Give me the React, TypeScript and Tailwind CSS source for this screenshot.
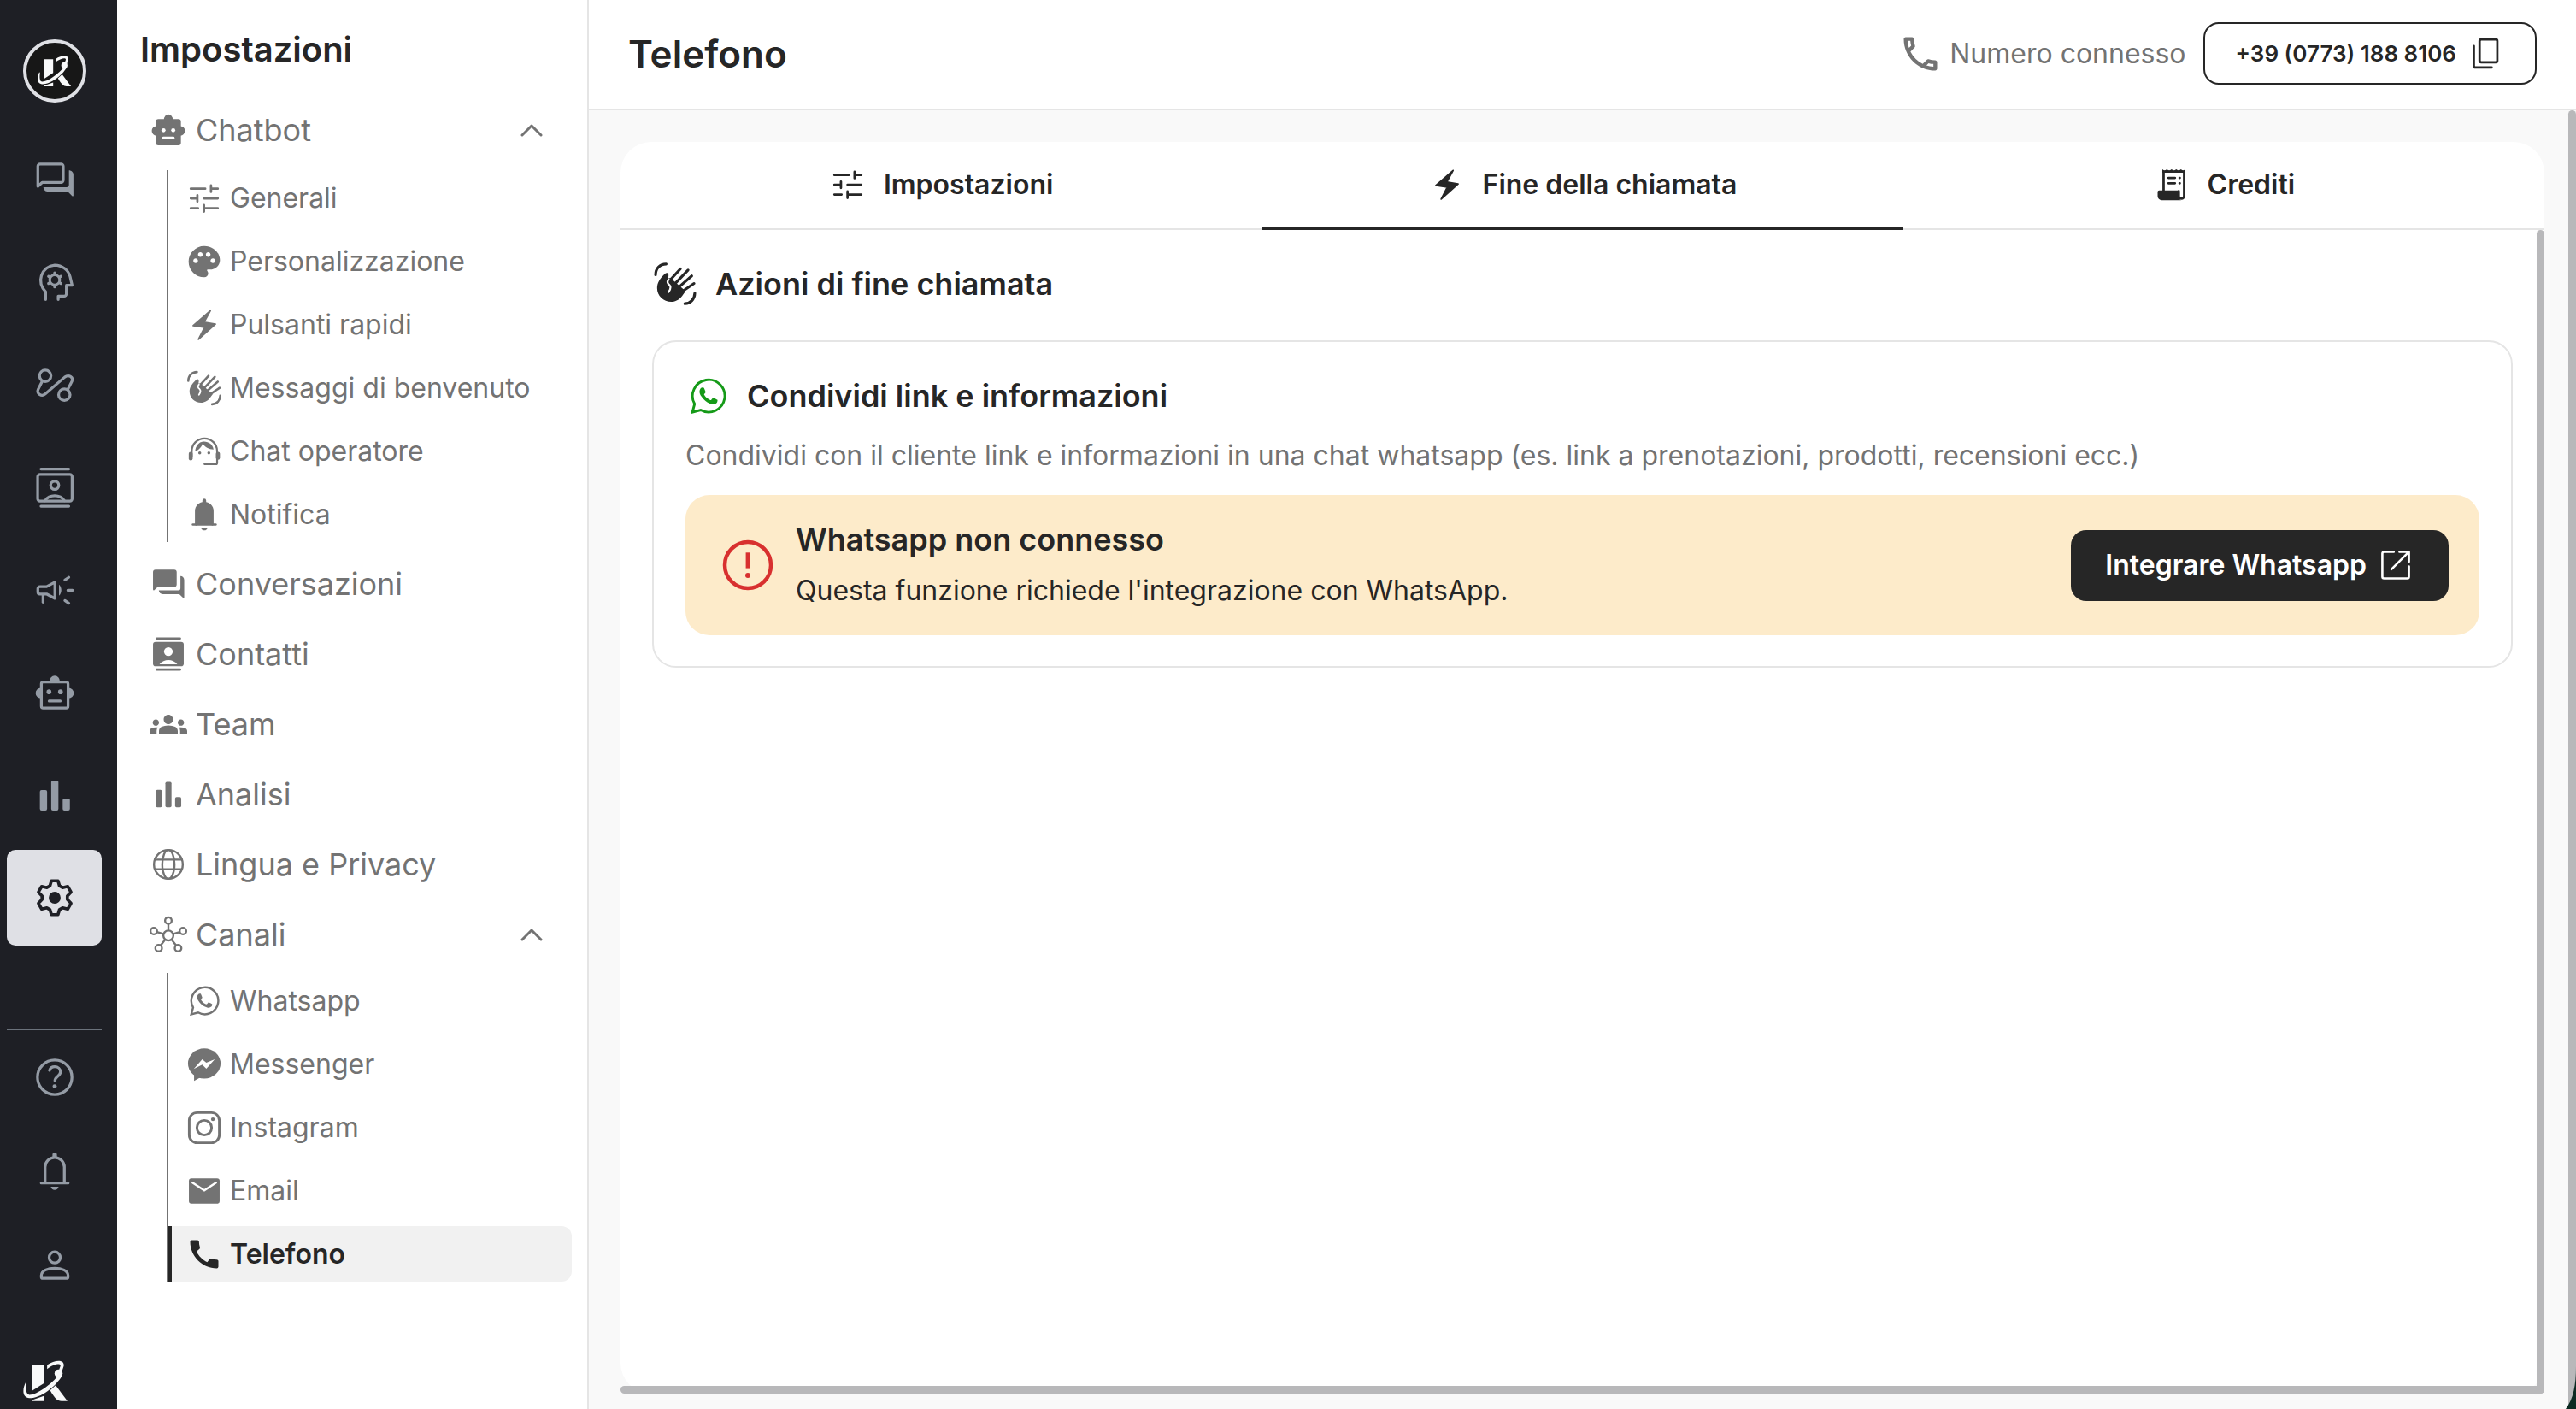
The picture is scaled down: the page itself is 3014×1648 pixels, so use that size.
import React from "react";
import type { ReactNode } from "react";
import { MdCall, MdGroups, MdOutlineCall, MdPalette } from "react-icons/md";

type IconProps = { className?: string; children?: ReactNode };

function Stroke({ className = "size-[44px]", children }: IconProps) {
  return (
    <svg
      viewBox="0 0 24 24"
      className={`shrink-0 ${className}`}
      fill="none"
      stroke="currentColor"
      strokeWidth="1.5"
      strokeLinecap="round"
      strokeLinejoin="round"
      aria-hidden="true"
    >
      {children}
    </svg>
  );
}

function Fill({ className = "size-[44px]", children }: IconProps) {
  return (
    <svg viewBox="0 0 24 24" className={`shrink-0 ${className}`} fill="currentColor" aria-hidden="true">
      {children}
    </svg>
  );
}

const RAIL = "size-[52px]";

function Logo({ className }: { className: string }) {
  return (
    <svg viewBox="128 130 124 116" className={className} fill="#f8f9fa" aria-hidden="true">
      <path d="M153 146H186V195L153 216Z" />
      <path d="M186 229V243H153V241Z" />
      <path d="M203 214L218 200L250 243H234C222 243 216 235 203 214Z" />
      <path d="M137 192C126 214 129 234 147 235C176 236 217 205 235 175L227 171C207 198 166 226 147 226C137 225 137 209 139 196Z" />
      <circle cx="226" cy="168" r="11" />
      <path d="M195 145C216 131 243 129 240 148L234 166L226 162L231 148C233 138 211 143 195 156Z" />
    </svg>
  );
}

/* ---------- rail icons ---------- */

const ForumBack = () => (
  <path
    d="M19.7 7C21 7 22.1 8 22.1 9.4V20.6C22.1 21 21.7 21.1 21.4 20.9L19 18.5H8.5C7 18.5 6 17.6 5.9 16.1H18.4A1.3 1.3 0 0 0 19.7 14.8Z"
    fill="currentColor"
    stroke="none"
  />
);

const ForumOutline = () => (
  <Stroke className={RAIL}>
    <path d="M2.9 4.8A1.2 1.2 0 0 1 4.1 3.6H15.4A1.2 1.2 0 0 1 16.6 4.8V12.4A1.2 1.2 0 0 1 15.4 13.6H5.2L2.9 15.7Z" />
    <ForumBack />
  </Stroke>
);

const Psychology = () => (
  <Stroke className={RAIL}>
    <path d="M7.1 21.4V17.2A8.3 8.3 0 0 1 12 2.8C16 2.8 19.5 5.6 20.3 9L21.4 13.7H18.3V18.3A1.2 1.2 0 0 1 17.1 19.5H13.9V21.4" />
    <circle cx="12" cy="10.8" r="2.7" strokeWidth="1.4" />
    {[0, 60, 120, 180, 240, 300].map((a) => (
      <path key={a} d="M12 7.3V7" strokeWidth="1.6" transform={`rotate(${a} 12 10.8)`} />
    ))}
  </Stroke>
);

const ConversionPath = () => (
  <Stroke className={RAIL}>
    <circle cx="6.9" cy="7.2" r="3.1" />
    <circle cx="17.2" cy="17.4" r="3.1" />
    <path d="M5.3 10L3.1 14.4C2 16.8 4.9 18.7 6.9 17L17.4 7.9C19.6 6.2 22.3 8 21.3 10.2L19 14.6" />
  </Stroke>
);

const ContactsOutline = () => (
  <Stroke className={RAIL}>
    <path d="M4.6 2.1H19.6M4.6 22.2H19.6" />
    <rect x="2.8" y="5" width="18.6" height="14.4" rx="1.2" />
    <circle cx="12" cy="10.9" r="2.2" />
    <path d="M6.8 19.2C9.2 15.7 14.8 15.7 17.2 19.2" />
  </Stroke>
);

const Campaign = () => (
  <Stroke className={RAIL}>
    <path d="M4 10.2H7.6L12.1 7.8V16.6L7.6 14.2H4A1.1 1.1 0 0 1 2.9 13.1V11.3A1.1 1.1 0 0 1 4 10.2Z" />
    <path d="M5.7 14.6V18.6" />
    <path d="M14.3 9.1C16 10.6 16 13.6 14.3 15.1Z" fill="currentColor" stroke="none" />
    <path d="M17.5 6.6L19.6 5.2M19.1 12.2H21.6M17.5 17.7L19.6 19.2" />
  </Stroke>
);

const RobotOutline = () => (
  <Stroke className={RAIL}>
    <rect x="4.8" y="6.3" width="14.4" height="14.1" rx="1" />
    <circle cx="8.9" cy="11.6" r="1.3" fill="currentColor" stroke="none" />
    <circle cx="15.1" cy="11.6" r="1.3" fill="currentColor" stroke="none" />
    <path d="M9 16.6H15" />
    <path
      d="M9.2 6.1A2.8 3.2 0 0 1 14.8 6.1ZM4.6 9.5V15.1A2.9 2.8 0 0 1 4.6 9.5ZM19.4 9.5V15.1A2.9 2.8 0 0 0 19.4 9.5Z"
      fill="currentColor"
      stroke="none"
    />
  </Stroke>
);

const Bars = ({ className }: IconProps) => (
  <Fill className={className}>
    <rect x="4" y="9.2" width="3.9" height="11.1" rx="0.9" />
    <rect x="10.1" y="4.1" width="3.9" height="16.2" rx="0.9" />
    <rect x="16.3" y="13.8" width="3.9" height="6.5" rx="0.9" />
  </Fill>
);

const GEAR = [0, 60, 120, 180, 240, 300]
  .flatMap((a) =>
    [
      [a - 22, 6.9],
      [a - 11, 9.3],
      [a + 11, 9.3],
      [a + 22, 6.9],
    ].map(([deg, r]) => {
      const t = ((deg - 90) * Math.PI) / 180;
      return `${(12 + r * Math.cos(t)).toFixed(2)},${(12 + r * Math.sin(t)).toFixed(2)}`;
    }),
  )
  .join(" ");

const Settings = () => (
  <Stroke className={RAIL}>
    <polygon points={GEAR} strokeWidth="1.7" />
    <circle cx="12" cy="12" r="3.2" fill="currentColor" stroke="none" />
  </Stroke>
);

const Help = () => (
  <Stroke className={RAIL}>
    <circle cx="12" cy="12" r="9.3" />
    <path d="M9.2 8.3C9.6 7 10.7 6.3 12 6.3C13.8 6.3 15.1 7.5 15.1 9.1C15.1 11.4 12.1 11.6 12.1 13.8" />
    <circle cx="12" cy="16.9" r="1.15" fill="currentColor" stroke="none" />
  </Stroke>
);

const Bell = ({ className, filled = false }: IconProps & { filled?: boolean }) => (
  <Stroke className={className}>
    <path d="M6.8 18.2V9.7A5.2 5.2 0 0 1 17.2 9.7V18.2" fill={filled ? "currentColor" : "none"} />
    <path d="M4.7 18.3H19.3" strokeWidth="1.4" />
    <path d="M10.8 4.8V3A1.2 1.2 0 0 1 13.2 3V4.8ZM9.9 20.3H14.1C13.9 21.4 13.1 22 12 22C10.9 22 10.1 21.4 9.9 20.3Z" fill="currentColor" stroke="none" />
  </Stroke>
);

const Person = () => (
  <Stroke className={RAIL}>
    <circle cx="12" cy="7.7" r="3" />
    <path d="M4.8 17.4C4.8 12.2 19.2 12.2 19.2 17.4V18.2A0.8 0.8 0 0 1 18.4 19H5.6A0.8 0.8 0 0 1 4.8 18.2Z" />
  </Stroke>
);

/* ---------- menu icons ---------- */

const Robot = () => (
  <Fill>
    <rect x="4" y="5" width="16" height="16.8" rx="1.6" />
    <path d="M9.2 5.4A2.8 3.4 0 0 1 14.8 5.4ZM4.4 9.5V15.7A2.9 3 0 0 1 4.4 9.5ZM19.6 9.5V15.7A2.9 3 0 0 0 19.6 9.5Z" />
    <path d="M8.8 17H15.2" stroke="#fff" strokeWidth="1.5" strokeLinecap="round" />
    <circle cx="8.9" cy="12.2" r="1.3" fill="#fff" />
    <circle cx="15.1" cy="12.2" r="1.3" fill="#fff" />
  </Fill>
);

const Tune = () => (
  <Stroke>
    <path d="M3.4 5.8H12.6M16.3 3.8V7.9M16.3 5.8H20.6M3.4 12H7.6M7.6 10V14.1M11.8 12H20.6M3.4 18.3H8M11.8 16.3V20.5M11.8 18.3H20.6" />
  </Stroke>
);

const Bolt = () => (
  <Fill>
    <path
      d="M15.9 2.9L4.9 12.5L12.2 13.6L8.3 21.2L19.1 11.5L11.9 10.3Z"
      stroke="currentColor"
      strokeWidth="1"
      strokeLinejoin="round"
    />
  </Fill>
);

const WavingHand = ({ className }: IconProps) => (
  <Stroke className={className}>
    <g strokeWidth="1.4">
      <path d="M1.8 7.3C1.8 4 4 1.8 7.3 1.7M22.2 16.8C22.1 20 20 22.2 17 22.3" />
      <path d="M9.6 9.8L14.7 4.2M12.2 11.6L18.7 4.8M14 13.6L20.6 7.9M15.6 16L21.8 11.8" />
    </g>
    <path
      d="M6.5 6.9C8 5.6 9 6.6 8.3 9L9.6 9L17.4 15.8L15.6 18.3C13.8 20.6 11.6 21.3 10 21.3C5.8 21.3 2.6 18.1 2.6 14.2C2.6 11.4 4 9.4 6.5 6.9Z"
      fill="currentColor"
      stroke="none"
    />
    <path d="M8.6 9.6C7.6 11 8 11.9 9 12.6C10.2 13.6 9.4 15 8.6 16.2" stroke="#fff" strokeWidth="1" />
  </Stroke>
);

const Support = () => (
  <Stroke>
    <path d="M4 15.5V11.8A8.1 8.1 0 0 1 20.2 11.8V19.3A0.8 0.8 0 0 1 19.4 20.1H12.1" strokeWidth="1.2" />
    <rect x="2.1" y="12.3" width="2.5" height="5.4" rx="1.2" fill="currentColor" stroke="none" />
    <rect x="19.4" y="12.3" width="2.6" height="5" rx="1.2" fill="currentColor" stroke="none" />
    <path d="M6.2 12C6.4 8.4 8.6 6 11.2 5.7C14.4 5.4 17.6 7.4 17.9 10.8C15 10.8 12.2 9.2 11 7C10.3 9.3 8.5 11.2 6.2 12Z" fill="currentColor" stroke="none" />
    <circle cx="9.1" cy="12.9" r="0.95" fill="currentColor" stroke="none" />
    <circle cx="14.9" cy="12.9" r="0.95" fill="currentColor" stroke="none" />
  </Stroke>
);

const Forum = () => (
  <Fill>
    <path d="M2.2 4.4A1.6 1.6 0 0 1 3.8 2.8H15.7A1.6 1.6 0 0 1 17.3 4.4V12.3A1.6 1.6 0 0 1 15.7 13.9H5.2L3 16C2.7 16.3 2.2 16.1 2.2 15.6Z" />
    <ForumBack />
  </Fill>
);

const Contacts = () => (
  <Fill>
    <rect x="3.9" y="1.3" width="16.2" height="1.5" rx="0.7" />
    <rect x="3.9" y="21.2" width="16.2" height="1.5" rx="0.7" />
    <rect x="2.2" y="4.2" width="19.6" height="15.6" rx="1.7" />
    <circle cx="12" cy="10.4" r="2.8" fill="#fff" />
    <path d="M6.3 18.5C9.2 14.9 14.8 14.9 17.7 18.5Z" fill="#fff" />
  </Fill>
);

const Globe = () => (
  <Stroke>
    <g strokeWidth="1.3">
      <circle cx="12" cy="12" r="9.2" />
      <path d="M3.4 8.9H20.6M3.4 15.1H20.6" />
      <ellipse cx="12" cy="12" rx="3.9" ry="9.2" />
    </g>
  </Stroke>
);

const Hub = () => (
  <Stroke className="size-[44px] overflow-visible">
    <g strokeWidth="1.3">
      <circle cx="12" cy="12.7" r="3.2" />
      <circle cx="12" cy="3.1" r="2.1" />
      <circle cx="2.7" cy="9.8" r="2.1" />
      <circle cx="21.3" cy="9.8" r="2.1" />
      <circle cx="5.8" cy="20.7" r="2.1" />
      <circle cx="18.2" cy="20.7" r="2.1" />
      <path d="M12 5.2V9.5M4.7 10.4L8.9 11.7M19.3 10.4L15.1 11.7M7.1 19L10 15.2M16.9 19L14 15.2" strokeLinecap="butt" />
    </g>
  </Stroke>
);

const Whatsapp = ({ className }: { className: string }) => (
  <svg viewBox="0 0 16 16" className={`shrink-0 ${className}`} fill="currentColor" aria-hidden="true">
    <path
      d="M0.8 15.3L1.8 11.6A7.2 7.2 0 1 1 4.5 14.3Z"
      fill="none"
      stroke="currentColor"
      strokeWidth="1.1"
      strokeLinejoin="miter"
    />
    <path d="M11.609 9.587c-.197-.099-1.17-.578-1.353-.646-.182-.065-.315-.099-.445.099-.133.197-.513.646-.627.775-.114.133-.232.148-.43.05-.197-.1-.836-.308-1.592-.985-.59-.525-.985-1.175-1.103-1.372-.114-.198-.011-.304.088-.403.087-.088.197-.232.296-.346.1-.114.133-.198.198-.33.065-.134.034-.248-.015-.347-.05-.099-.445-1.076-.612-1.47-.16-.389-.323-.335-.445-.34-.114-.007-.247-.007-.38-.007a.73.73 0 0 0-.529.247c-.182.198-.691.677-.691 1.654s.71 1.916.81 2.049c.098.133 1.394 2.132 3.383 2.992.47.205.84.326 1.129.418.475.152.904.129 1.246.08.38-.058 1.171-.48 1.338-.943.164-.464.164-.86.114-.943-.049-.084-.182-.133-.38-.232" />
  </svg>
);

const Messenger = () => (
  <Fill>
    <ellipse cx="12" cy="11.4" rx="10.4" ry="9.6" />
    <path d="M5.5 22.5V17H13L9.2 20.4Z" />
    <polygon points="5.3,14.9 10.7,8.7 13.3,10.9 18.7,8.7 13.3,14.7 10.7,12.2" fill="#fff" />
  </Fill>
);

const Instagram = () => (
  <Stroke>
    <rect x="2.4" y="2.4" width="19.2" height="19.2" rx="5" strokeWidth="1.6" />
    <circle cx="12" cy="12" r="4.7" strokeWidth="1.6" />
    <circle cx="17.5" cy="6.6" r="1.2" fill="currentColor" stroke="none" />
  </Stroke>
);

const Email = () => (
  <Fill>
    <rect x="2.2" y="4" width="19.6" height="16" rx="1.6" />
    <path d="M4.5 6.7L12 11.6L19.5 6.7" fill="none" stroke="#fff" strokeWidth="1.3" strokeLinecap="round" />
  </Fill>
);

const Receipt = () => (
  <Stroke>
    <path d="M6.8 16V3.6H19.9V19.3A1.7 1.7 0 0 1 16.5 19.3V16.2" strokeLinejoin="miter" />
    <path
      d="M6 4.4V2.2L7.4 3.2L8.9 2.2L10.4 3.2L11.9 2.2L13.4 3.2L14.9 2.2L16.4 3.2L17.9 2.2L19.2 3.2L20.7 2.2V4.4Z"
      fill="currentColor"
      stroke="none"
    />
    <path d="M3 16.6A0.9 0.9 0 0 1 3.9 15.7H16.5V19.3C16.5 20.8 17.4 21.9 18.2 21.9H5.6A2.6 2.6 0 0 1 3 19.3Z" fill="currentColor" stroke="none" />
    <path d="M9.9 7.7H14M17 7.7H17.1M9.9 11.1H14M17 11.1H17.1" strokeWidth="1.6" />
  </Stroke>
);

const Copy = () => (
  <Stroke>
    <rect x="8.3" y="2.8" width="11.3" height="14.6" rx="1" />
    <path d="M4.6 7V19.6A1.1 1.1 0 0 0 5.7 20.7H16" />
  </Stroke>
);

const OpenInNew = () => (
  <Stroke>
    <g strokeWidth="1.4">
      <path d="M10.8 3.5H4.6A1.1 1.1 0 0 0 3.5 4.6V19.4A1.1 1.1 0 0 0 4.6 20.5H19.4A1.1 1.1 0 0 0 20.5 19.4V12.8" />
      <path d="M14.4 3.5H20.5V9.8M20.2 3.8L9.3 14.7" />
    </g>
  </Stroke>
);

const Alert = () => (
  <Stroke className="size-[72px] text-[#d8302f]">
    <circle cx="12" cy="12" r="9" strokeWidth="1.5" />
    <path d="M12 7.1V13.2" strokeWidth="1.6" strokeLinecap="butt" />
    <circle cx="12" cy="16" r="1" fill="currentColor" stroke="none" />
  </Stroke>
);

const Chevron = () => (
  <svg viewBox="0 0 28 16" className="h-4 w-7 shrink-0" fill="none" stroke="currentColor" strokeWidth="3" strokeLinecap="round" strokeLinejoin="round" aria-hidden="true">
    <path d="M3 14L14 3L25 14" />
  </svg>
);

/* ---------- page parts ---------- */

const railMain: { label: string; icon: ReactNode; active?: boolean }[] = [
  { label: "Conversazioni", icon: <ForumOutline /> },
  { label: "Addestramento", icon: <Psychology /> },
  { label: "Flussi", icon: <ConversionPath /> },
  { label: "Contatti", icon: <ContactsOutline /> },
  { label: "Campagne", icon: <Campaign /> },
  { label: "Chatbot", icon: <RobotOutline /> },
  { label: "Analisi", icon: <Bars className={RAIL} /> },
  { label: "Impostazioni", icon: <Settings />, active: true },
];

const railFoot = [
  { label: "Aiuto", icon: <Help /> },
  { label: "Notifiche", icon: <Bell className={RAIL} /> },
  { label: "Profilo", icon: <Person /> },
];

function Rail() {
  return (
    <nav aria-label="Principale" className="flex w-[137px] shrink-0 flex-col bg-[#1e1f25] pr-[18px] pl-2 text-[#949ba5]">
      <a href="#home" aria-label="Home" className="mt-[46px] flex size-[74px] items-center justify-center self-center rounded-full border-4 border-[#dfe0e5] bg-[#171717]">
        <Logo className="h-[38px] w-[41px]" />
      </a>
      <div className="mt-[34px] flex flex-col gap-2">
        {railMain.map((item) => (
          <button
            key={item.label}
            type="button"
            aria-label={item.label}
            className={`flex h-28 items-center justify-center rounded-[10px] ${item.active ? "bg-[#dfe0e5] text-[#1e1f25]" : ""}`}
          >
            {item.icon}
          </button>
        ))}
      </div>
      <div className="mt-[97px] h-0.5 shrink-0 bg-[#6b727b]" />
      <div className="flex flex-col">
        {railFoot.map((item) => (
          <button key={item.label} type="button" aria-label={item.label} className="flex h-[110px] items-center justify-center">
            {item.icon}
          </button>
        ))}
      </div>
      <Logo className="mt-auto mb-2 ml-[18px] h-[50px] w-[54px] shrink-0" />
    </nav>
  );
}

type SubItem = { label: string; icon: ReactNode; active?: boolean };

const chatbotItems: SubItem[] = [
  { label: "Generali", icon: <Tune /> },
  { label: "Personalizzazione", icon: <MdPalette size={44} /> },
  { label: "Pulsanti rapidi", icon: <Bolt /> },
  { label: "Messaggi di benvenuto", icon: <WavingHand /> },
  { label: "Chat operatore", icon: <Support /> },
  { label: "Notifica", icon: <Bell filled /> },
];

const channelItems: SubItem[] = [
  { label: "Whatsapp", icon: <Whatsapp className="size-[35px]" /> },
  { label: "Messenger", icon: <Messenger /> },
  { label: "Instagram", icon: <Instagram /> },
  { label: "Email", icon: <Email /> },
  { label: "Telefono", icon: <MdCall size={44} />, active: true },
];

function Row({ icon, label, expandable = false }: { icon: ReactNode; label: string; expandable?: boolean }) {
  return (
    <button
      type="button"
      aria-expanded={expandable ? true : undefined}
      className="flex h-[82px] w-full items-center gap-2.5 pr-[51px] pl-[38px] text-left text-[36px] leading-[48px]"
    >
      {icon}
      <span className="flex-1">{label}</span>
      {expandable && <Chevron />}
    </button>
  );
}

function SubList({ items }: { items: SubItem[] }) {
  return (
    <ul className="mr-[18px] ml-[58px] flex flex-col gap-[9px] border-l-2 border-[#737373]">
      {items.map((item) => (
        <li key={item.label}>
          <a
            href={`#${item.label.toLowerCase().replace(/ /g, "-")}`}
            aria-current={item.active ? "page" : undefined}
            className={`flex h-[65px] items-center gap-2 text-[32px] leading-10 ${
              item.active
                ? "rounded-r-xl border-l-4 border-[#262626] bg-[#f1f1f1] pl-4 font-semibold text-[#262626]"
                : "pl-5"
            }`}
          >
            <span className="flex w-[44px] shrink-0 justify-center">{item.icon}</span>
            {item.label}
          </a>
        </li>
      ))}
    </ul>
  );
}

function Sidebar() {
  return (
    <aside className="w-[552px] shrink-0 border-r-2 border-[#e5e5e5] bg-white text-[#737373]">
      <h2 className="mt-[34px] mb-[29px] pl-[27px] text-[40px] leading-[48px] font-semibold text-[#262626]">Impostazioni</h2>
      <Row icon={<Robot />} label="Chatbot" expandable />
      <div className="mt-1.5 mb-2">
        <SubList items={chatbotItems} />
      </div>
      <Row icon={<Forum />} label="Conversazioni" />
      <Row icon={<Contacts />} label="Contatti" />
      <Row icon={<MdGroups size={44} className="shrink-0" />} label="Team" />
      <Row icon={<Bars />} label="Analisi" />
      <Row icon={<Globe />} label="Lingua e Privacy" />
      <Row icon={<Hub />} label="Canali" expandable />
      <div className="mt-1">
        <SubList items={channelItems} />
      </div>
    </aside>
  );
}

const tabs = [
  { label: "Impostazioni", icon: <Tune /> },
  { label: "Fine della chiamata", icon: <Bolt />, active: true },
  { label: "Crediti", icon: <Receipt /> },
];

export default function App() {
  return (
    <div className="relative flex h-screen overflow-hidden bg-white font-['Inter',sans-serif] text-[#262626]">
      <Rail />
      <Sidebar />
      <main className="flex min-w-0 flex-1 flex-col bg-[#f9f9f9]">
        <header className="flex h-[129px] shrink-0 items-center justify-between border-b-2 border-[#e5e5e5] bg-white px-[46px] pb-0.5">
          <h1 className="text-[44px] leading-[56px] font-semibold">Telefono</h1>
          <div className="flex items-center gap-5">
            <span className="flex items-center gap-2 text-[32px] leading-10 text-[#737373]">
              <MdOutlineCall size={52} />
              Numero connesso
            </span>
            <button type="button" className="flex h-[73px] items-center gap-3 rounded-[18px] border-2 border-[#262626] px-9 text-[26px] leading-9 font-semibold">
              +39 (0773) 188 8106
              <Copy />
            </button>
          </div>
        </header>

        <div className="relative flex min-h-0 flex-1 flex-col px-[37px] pt-[37px] pb-[18px]">
          <section className="relative flex-1 rounded-[36px] bg-white">
            <div role="tablist" className="grid h-[103px] grid-cols-3 border-b-2 border-[#e5e5e5]">
              {tabs.map((tab) => (
                <button
                  key={tab.label}
                  type="button"
                  role="tab"
                  aria-selected={tab.active ? true : false}
                  className={`-mb-0.5 flex items-center justify-center gap-5 border-b-4 text-[32px] leading-10 font-semibold ${
                    tab.active ? "border-[#262626]" : "border-transparent"
                  }`}
                >
                  {tab.icon}
                  {tab.label}
                </button>
              ))}
            </div>

            <div role="tabpanel" className="px-[37px] pt-9">
              <div className="flex items-center gap-5">
                <WavingHand className="size-[54px]" />
                <h2 className="text-[36px] leading-[52px] font-semibold">Azioni di fine chiamata</h2>
              </div>

              <article className="mt-[39px] rounded-[28px] border-2 border-[#e5e5e5] px-[37px] pt-[37px] pb-9">
                <div className="flex items-center gap-6 pl-1.5">
                  <Whatsapp className="size-[42px] text-[#159a18]" />
                  <h3 className="text-[36px] leading-[52px] font-semibold">Condividi link e informazioni</h3>
                </div>
                <p className="mt-5 text-[32px] leading-[48px] text-[#737373]">
                  Condividi con il cliente link e informazioni in una chat whatsapp (es. link a prenotazioni, prodotti, recensioni ecc.)
                </p>
                <div role="alert" className="mt-[22px] flex items-center gap-5 rounded-[28px] bg-[#fdebca] py-7 pr-9 pl-[37px]">
                  <Alert />
                  <div className="flex flex-1 flex-col gap-3">
                    <h4 className="text-[36px] leading-[48px] font-semibold">Whatsapp non connesso</h4>
                    <p className="text-[32px] leading-[48px]">Questa funzione richiede l'integrazione con WhatsApp.</p>
                  </div>
                  <a href="#whatsapp" className="flex h-[83px] items-center gap-3 rounded-[18px] bg-[#262626] px-10 text-[32px] leading-10 font-semibold text-white">
                    Integrare Whatsapp
                    <OpenInNew />
                  </a>
                </div>
              </article>
            </div>

            <div className="absolute top-[103px] right-0 bottom-0 w-[9px] rounded-full bg-[#b8b8ba]" />
            <div className="absolute inset-x-0 bottom-0 h-[9px] rounded-full bg-[#b8b8ba]" />
          </section>
          <div className="absolute top-0 right-0 bottom-0 w-[9px] rounded-t-full bg-[#b8b8ba]" />
        </div>
      </main>
      <svg viewBox="0 0 12 50" className="absolute right-0 bottom-0 h-[50px] w-3" aria-hidden="true">
        <path d="M12 0C12 22 9 38 0 50H12Z" fill="#0c2a22" />
      </svg>
    </div>
  );
}
